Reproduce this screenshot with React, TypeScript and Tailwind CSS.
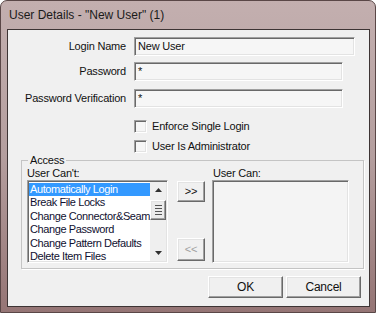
const sunken =
  'border border-t-[#a0a0a0] border-l-[#a0a0a0] border-r-white border-b-white shadow-[inset_1px_1px_0_#696969,inset_-1px_-1px_0_#e3e3e3]'
const raised =
  'border border-t-white border-l-white border-r-[#696969] border-b-[#696969] shadow-[inset_-1px_-1px_0_#a0a0a0,inset_1px_1px_0_#e3e3e3]'

const cantItems = [
  'Automatically Login',
  'Break File Locks',
  'Change Connector&Seam',
  'Change Password',
  'Change Pattern Defaults',
  'Delete Item Files',
  'Edit CAD Base Sets',
]

function Field({ label, value, wide }: { label: string; value: string; wide?: boolean }) {
  return (
    <div className="flex items-center">
      <div className="w-[119px] text-right pr-[1px]">{label}</div>
      <div
        className={`ml-[7px] h-[19px] ${wide ? 'w-[221px]' : 'w-[209px]'} bg-[#f6f6f6] ${sunken} pl-[3px] leading-[17px]`}
      >
        {value}
      </div>
    </div>
  )
}

function Check({ label }: { label: string }) {
  return (
    <div className="flex items-center ml-[126px] h-[13px]">
      <div className={`w-[13px] h-[13px] bg-[#f6f6f6] ${sunken}`} />
      <span className="ml-[5px]">{label}</span>
    </div>
  )
}

function Arrow({ up }: { up?: boolean }) {
  return (
    <div className="h-[16px] flex items-center justify-center">
      <svg width="7" height="4" viewBox="0 0 7 4">
        <polygon points={up ? '0,4 3.5,0 7,4' : '0,0 7,0 3.5,4'} fill="#303030" />
      </svg>
    </div>
  )
}

export default function App() {
  return (
    <div className="w-[376px] h-[313px] overflow-hidden rounded-t-[7px] border border-[#5a4747] bg-gradient-to-b from-[#c3afaf] via-[#b49e9e] to-[#957575] font-['Liberation_Sans',Arial,sans-serif] text-[11px] tracking-[-0.2px] text-[#111]">
      <div className="h-[28px] pl-[8px] flex items-center text-[12px] tracking-[0px] text-[#1a1a1a]">
        User Details - "New User" (1)
      </div>

      <div className="ml-[6px] w-[363px] h-[278px] border border-[#3d3434] bg-[#f0f0f0] flex flex-col">
        <div className="mt-[7px]">
          <Field label="Login Name" value="New User" wide />
        </div>
        <div className="mt-[6px]">
          <Field label="Password" value="*" />
        </div>
        <div className="mt-[8px]">
          <Field label="Password Verification" value="*" />
        </div>

        <div className="mt-[12px]">
          <Check label="Enforce Single Login" />
        </div>
        <div className="mt-[7px]">
          <Check label="User Is Administrator" />
        </div>

        <fieldset className="mt-[1px] ml-[13px] w-[343px] border border-[#c4c4c4] shadow-[1px_1px_0_#fff] pl-[5px] pb-[5px]">
          <legend className="ml-[1px] px-[2px] leading-[13px]">Access</legend>
          <div className="flex leading-[13px]">
            <div className="w-[186px]">User Can't:</div>
            <div>User Can:</div>
          </div>
          <div className="flex">
            <div className={`w-[141px] h-[83px] bg-white ${sunken} flex p-[1px]`}>
              <div className="flex-1 overflow-hidden pt-[1px] tracking-[-0.4px]">
                {cantItems.map((item, i) => (
                  <div
                    key={item}
                    className={`h-[13.4px] leading-[13.4px] pl-[1px] whitespace-nowrap ${
                      i === 0 ? 'bg-[#3399ff] text-white' : 'text-[#101030]'
                    }`}
                  >
                    {item}
                  </div>
                ))}
              </div>
              <div className="w-[16px] bg-[#efefef] flex flex-col">
                <Arrow up />
                <div className={`mt-[2px] h-[20px] bg-[#ececec] ${raised} flex flex-col items-center justify-center gap-[2px]`}>
                  <div className="w-[7px] h-px bg-[#555]" />
                  <div className="w-[7px] h-px bg-[#555]" />
                  <div className="w-[7px] h-px bg-[#555]" />
                  <div className="w-[7px] h-px bg-[#555]" />
                </div>
                <div className="flex-1" />
                <Arrow />
              </div>
            </div>

            <div className="ml-[9px] w-[28px] flex flex-col justify-between pt-[1px] pb-[2px]">
              <div className={`h-[21px] bg-[#f0f0f0] ${raised} flex items-center justify-center`}>&gt;&gt;</div>
              <div className={`h-[23px] bg-[#f0f0f0] ${raised} flex items-center justify-center text-[#a0a0a0]`}>
                &lt;&lt;
              </div>
            </div>

            <div className={`ml-[7px] w-[137px] h-[83px] bg-[#f4f4f4] ${sunken}`} />
          </div>
        </fieldset>

        <div className="mt-[7px] flex justify-end gap-[3px] pr-[8px]">
          <div className={`w-[75px] h-[22px] bg-[#f0f0f0] ${raised} flex items-center justify-center text-[12px]`}>
            OK
          </div>
          <div className={`w-[75px] h-[22px] bg-[#f0f0f0] ${raised} flex items-center justify-center text-[12px]`}>
            Cancel
          </div>
        </div>
      </div>
    </div>
  )
}
